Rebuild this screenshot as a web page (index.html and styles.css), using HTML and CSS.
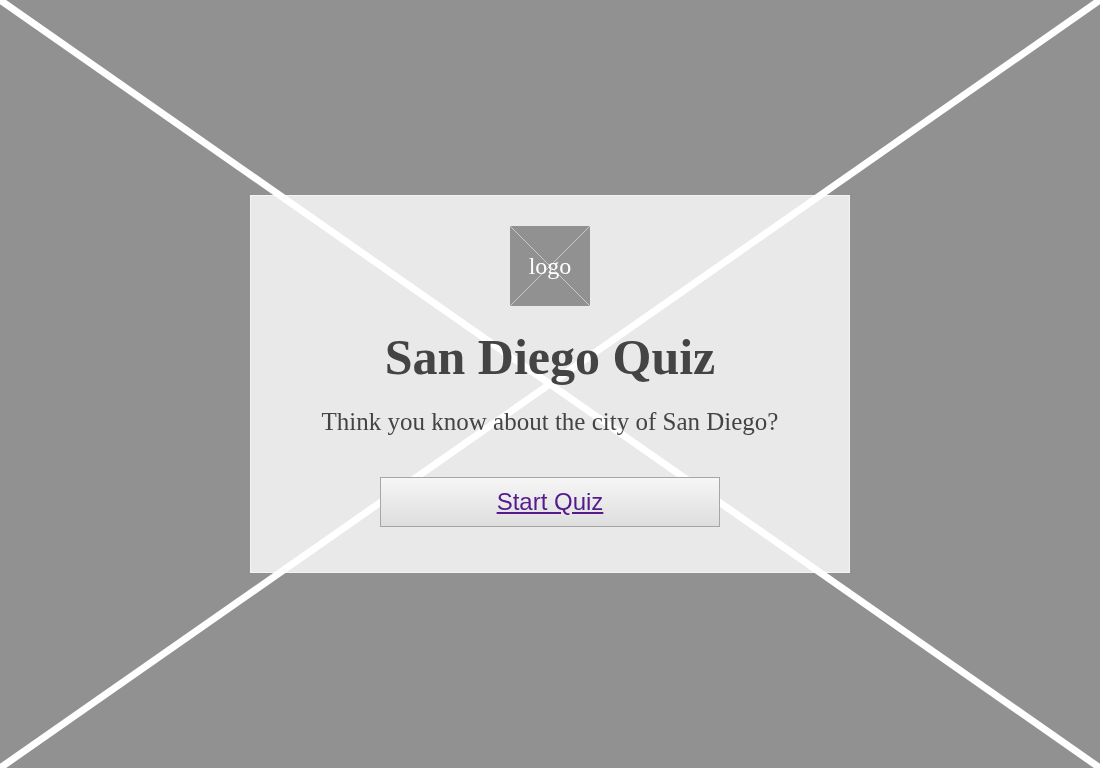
FILE: index.html
```html
<!DOCTYPE html>
<html lang="en">
<head>
<meta charset="utf-8">
<title>San Diego Quiz</title>
<link rel="stylesheet" href="styles.css">
</head>
<body>
<svg class="backdrop" viewBox="0 0 1100 768" preserveAspectRatio="none" aria-hidden="true">
  <line x1="0" y1="0" x2="1100" y2="768"/>
  <line x1="1100" y1="0" x2="0" y2="768"/>
</svg>
<main class="page">
  <section class="card">
    <div class="logo">
      <svg class="logo-x" viewBox="0 0 80 80" aria-hidden="true">
        <line x1="0" y1="0" x2="80" y2="80"/>
        <line x1="80" y1="0" x2="0" y2="80"/>
      </svg>
      <span class="logo-text">logo</span>
    </div>
    <h1 class="title">San Diego Quiz</h1>
    <p class="subtitle">Think you know about the city of San Diego?</p>
    <div class="start-btn"><a href="#" class="start-link">Start Quiz</a></div>
  </section>
</main>
</body>
</html>
```
FILE: styles.css
```css
html, body {
  margin: 0;
  padding: 0;
  height: 100%;
}
body {
  background: #919191;
  font-family: "Liberation Serif", "Times New Roman", serif;
  color: #444;
  overflow: hidden;
}
.backdrop {
  position: fixed;
  inset: 0;
  width: 100%;
  height: 100%;
  z-index: 0;
}
.backdrop line {
  stroke: #fff;
  stroke-width: 7;
}
.page {
  position: relative;
  z-index: 1;
  height: 100%;
  display: flex;
  align-items: center;
  justify-content: center;
}
.card {
  box-sizing: border-box;
  width: 600px;
  height: 378px;
  padding: 30px 0 0;
  background: rgba(255, 255, 255, 0.8);
  border: 1px solid rgba(255, 255, 255, 0.45);
  display: flex;
  flex-direction: column;
  align-items: center;
}
.logo {
  position: relative;
  width: 80px;
  height: 80px;
  background: #919191;
  display: flex;
  align-items: center;
  justify-content: center;
}
.logo-x {
  position: absolute;
  inset: 0;
  width: 80px;
  height: 80px;
}
.logo-x line {
  stroke: #c8c8c8;
  stroke-width: 1;
}
.logo-text {
  position: relative;
  color: #fff;
  font-size: 24px;
  line-height: 1;
}
.title {
  margin: 22px 0 0;
  font-size: 50px;
  line-height: 58px;
  font-weight: bold;
  color: #444;
}
.subtitle {
  margin: 22px 0 0;
  font-size: 25px;
  line-height: 28px;
  color: #444;
}
.start-btn {
  box-sizing: border-box;
  margin-top: 41px;
  width: 340px;
  height: 50px;
  border: 1px solid #a6a6a6;
  background: linear-gradient(#f6f6f6, #dedede);
  display: flex;
  align-items: center;
  justify-content: center;
}
.start-link {
  font-family: "Liberation Sans", Arial, sans-serif;
  font-size: 24px;
  color: #551a8b;
  text-decoration: underline;
}
```
